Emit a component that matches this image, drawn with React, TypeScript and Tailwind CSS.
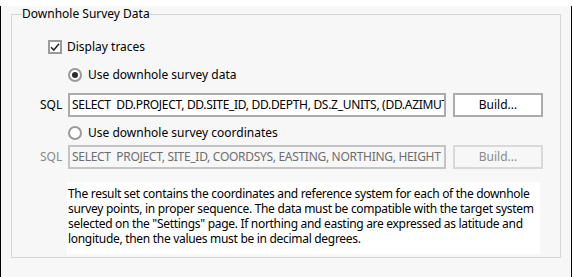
import React from "react";

const font = { fontFamily: '"Noto Sans", "Segoe UI", sans-serif' };

const CheckBox = () => (
  <span className="w-[14px] h-[14px] border-2 border-[#9a9a9a] bg-white flex items-center justify-center">
    <svg viewBox="0 0 10 10" className="w-[10px] h-[10px]">
      <path d="M1 5.2 L3.8 8 L9 1.8" fill="none" stroke="#2b2b2b" strokeWidth="1.6" />
    </svg>
  </span>
);

const Radio = ({ on }: { on?: boolean }) => (
  <span className="w-[14px] h-[14px] rounded-full border-2 border-[#9a9a9a] bg-white flex items-center justify-center">
    {on && <span className="w-[6px] h-[6px] rounded-full bg-[#2b2b2b]" />}
  </span>
);

const SqlRow = ({ text, disabled }: { text: string; disabled?: boolean }) => (
  <div className="flex items-center h-[24px]">
    <span className={`w-[56px] shrink-0 pl-[28px] ${disabled ? "text-[#8a8a8a]" : "text-black"}`}>SQL</span>
    <div
      className={`w-[378px] shrink-0 h-full border-2 px-[2px] flex items-center overflow-hidden whitespace-pre tracking-[-0.3px] ${
        disabled ? "border-[#c4c4c4] bg-[#f7f7f7] text-[#6d6d6d]" : "border-[#ababab] bg-white text-black"
      }`}
    >
      {text}
    </div>
    <div
      className={`ml-[7px] w-[90px] shrink-0 h-full border-2 flex items-center justify-center ${
        disabled ? "border-[#d9d9d9] bg-[#f7f7f7] text-[#8a8a8a]" : "border-[#ababab] bg-white text-black"
      }`}
    >
      Build...
    </div>
  </div>
);

export default function App() {
  return (
    <div
      className="w-[572px] h-[277px] bg-[#f7f7f7] border-l border-r border-b border-black text-[12px] leading-[16px] text-black"
      style={font}
    >
      <fieldset className="ml-[10px] mt-[6px] w-[550px] h-[252px] border border-[#d5d5d5] min-w-0">
        <legend className="ml-[10px] px-0">Downhole Survey Data</legend>
        <div className="flex flex-col">
          <label className="flex items-center gap-[5px] ml-[36px] mt-[17px]">
            <CheckBox />
            <span>Display traces</span>
          </label>
          <label className="flex items-center gap-[6px] ml-[56px] mt-[12px]">
            <Radio on />
            <span>Use downhole survey data</span>
          </label>
          <div className="mt-[10px]">
            <SqlRow text="SELECT  DD.PROJECT, DD.SITE_ID, DD.DEPTH, DS.Z_UNITS, (DD.AZIMUTH" />
          </div>
          <label className="flex items-center gap-[6px] ml-[56px] mt-[8px]">
            <Radio />
            <span>Use downhole survey coordinates</span>
          </label>
          <div className="mt-[4px]">
            <SqlRow disabled text="SELECT  PROJECT, SITE_ID, COORDSYS, EASTING, NORTHING, HEIGHT" />
          </div>
          <p className="ml-[55px] mt-[13px] w-[473px] h-[72px] bg-white pt-[4px] pl-[1px] leading-[15px] tracking-[-0.3px] whitespace-nowrap overflow-hidden">
            The result set contains the coordinates and reference system for each of the downhole
            <br />
            survey points, in proper sequence. The data must be compatible with the target system
            <br />
            selected on the "Settings" page. If northing and easting are expressed as latitude and
            <br />
            longitude, then the values must be in decimal degrees.
          </p>
        </div>
      </fieldset>
    </div>
  );
}
